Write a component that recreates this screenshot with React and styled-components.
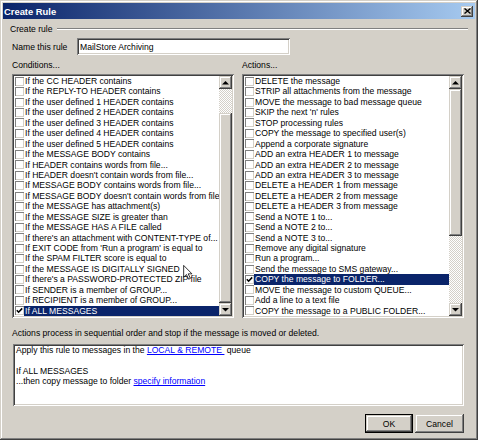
import React from "react";
import styled, { createGlobalStyle, css } from "styled-components";

const conditions = [
  "If the CC HEADER contains",
  "If the REPLY-TO HEADER contains",
  "If the user defined 1 HEADER contains",
  "If the user defined 2 HEADER contains",
  "If the user defined 3 HEADER contains",
  "If the user defined 4 HEADER contains",
  "If the user defined 5 HEADER contains",
  "If the MESSAGE BODY contains",
  "If HEADER contains words from file...",
  "If HEADER doesn't contain words from file...",
  "If MESSAGE BODY contains words from file...",
  "If MESSAGE BODY doesn't contain words from file.",
  "If the MESSAGE has attachment(s)",
  "If the MESSAGE SIZE is greater than",
  "If the MESSAGE HAS A FILE called",
  "If there's an attachment with CONTENT-TYPE of...",
  "If EXIT CODE from 'Run a program' is equal to",
  "If the SPAM FILTER score is equal to",
  "If the MESSAGE IS DIGITALLY SIGNED",
  "If there's a PASSWORD-PROTECTED ZIP file",
  "If SENDER is a member of GROUP...",
  "If RECIPIENT is a member of GROUP...",
  "If ALL MESSAGES",
];

const actions = [
  "DELETE the message",
  "STRIP all attachments from the message",
  "MOVE the message to bad message queue",
  "SKIP the next 'n' rules",
  "STOP processing rules",
  "COPY the message to specified user(s)",
  "Append a corporate signature",
  "ADD an extra HEADER 1 to message",
  "ADD an extra HEADER 2 to message",
  "ADD an extra HEADER 3 to message",
  "DELETE a HEADER 1 from message",
  "DELETE a HEADER 2 from message",
  "DELETE a HEADER 3 from message",
  "Send a NOTE 1 to...",
  "Send a NOTE 2 to...",
  "Send a NOTE 3 to...",
  "Remove any digital signature",
  "Run a program...",
  "Send the message to SMS gateway...",
  "COPY the message to FOLDER...",
  "MOVE the message to custom QUEUE...",
  "Add a line to a text file",
  "COPY the message to a PUBLIC FOLDER...",
];

const GlobalStyle = createGlobalStyle`
  html, body {
    margin: 0;
    padding: 0;
    background: #d4d0c8;
  }
  body {
    font-family: "Liberation Sans", Arial, sans-serif;
    font-size: 8.6px;
    color: #000;
  }
`;

const raised = css`
  background: #d4d0c8;
  box-shadow: inset -1px -1px #404040, inset 1px 1px #d4d0c8,
    inset -2px -2px #808080, inset 2px 2px #fff;
`;

const sunken = css`
  box-shadow: inset 1px 1px #808080, inset -1px -1px #fff,
    inset 2px 2px #404040, inset -2px -2px #d4d0c8;
`;

const Window = styled.div`
  position: relative;
  width: 478px;
  height: 440px;
  box-sizing: border-box;
  padding: 3px;
  display: flex;
  flex-direction: column;
  ${raised}
`;

const TitleBar = styled.div`
  height: 16px;
  display: flex;
  align-items: center;
  justify-content: space-between;
  padding: 0 2px 0 1px;
  background: linear-gradient(to right, #0a246a, #a6caf0);
`;

const Title = styled.span`
  color: #fff;
  font-weight: bold;
  font-size: 9.4px;
`;

const CloseButton = styled.div`
  width: 12px;
  height: 11px;
  display: flex;
  align-items: center;
  justify-content: center;
  ${raised}
`;

const Body = styled.div`
  flex: 1;
  display: flex;
  flex-direction: column;
  padding: 0 11px 0 9px;
`;

const GroupHeader = styled.div`
  height: 10px;
  margin: 5px -4px 0 -2px;
  display: flex;
  align-items: center;
  gap: 4px;
`;

const Etched = styled.div`
  flex: 1;
  border-top: 1px solid #808080;
  border-bottom: 1px solid #fff;
`;

const NameRow = styled.div`
  margin-top: 4px;
  height: 17px;
  display: flex;
  align-items: center;
`;

const NameLabel = styled.span`
  width: 65px;
`;

const TextInput = styled.div`
  width: 213px;
  height: 17px;
  box-sizing: border-box;
  padding: 0 3px;
  display: flex;
  align-items: center;
  background: #fff;
  ${sunken}
`;

const Columns = styled.div`
  display: grid;
  grid-template-columns: 222px 222px;
  column-gap: 8px;
  margin-top: ${(p) => p.$gap}px;
`;

const ColumnLabel = styled.div`
  height: 10px;
  line-height: 10px;
`;

const ListBox = styled.div`
  height: 244px;
  box-sizing: border-box;
  padding: 2px;
  display: flex;
  background: #fff;
  ${sunken}
`;

const Rows = styled.div`
  flex: 1;
  min-width: 0;
  display: flex;
  flex-direction: column;
`;

const Row = styled.div`
  height: 10.45px;
  display: flex;
  align-items: center;
`;

const Check = styled.div`
  flex: none;
  width: 9px;
  height: 9px;
  margin-left: 1px;
  display: flex;
  align-items: center;
  justify-content: center;
  background: #fff;
  box-shadow: inset 1px 1px #808080, inset -1px -1px #d4d0c8;
`;

const RowText = styled.div`
  flex: 1;
  height: 100%;
  line-height: 10.45px;
  padding-left: 1px;
  white-space: nowrap;
  overflow: hidden;
  ${(p) =>
    p.$selected &&
    css`
      background: #0a246a;
      color: #fff;
    `}
`;

const ScrollBar = styled.div`
  flex: none;
  width: 13px;
  display: flex;
  flex-direction: column;
`;

const ScrollButton = styled.div`
  flex: none;
  height: 13px;
  display: flex;
  align-items: center;
  justify-content: center;
  ${raised}
`;

const Track = styled.div`
  flex: 1;
  display: flex;
  flex-direction: column;
  background: repeating-conic-gradient(#fff 0 25%, #d4d0c8 0 50%) 0 0 / 2px 2px;
`;

const Thumb = styled.div`
  flex: none;
  margin-top: ${(p) => p.$offset}px;
  height: ${(p) => p.$size}px;
  ${raised}
`;

const Note = styled.div`
  margin-top: 10px;
  height: 10px;
  line-height: 10px;
`;

const InfoBox = styled.div`
  margin: 6px 0 0 1px;
  height: 62px;
  box-sizing: border-box;
  padding: 1px 3px;
  background: #fff;
  line-height: 10.45px;
  ${sunken}
`;

const InfoLine = styled.div`
  height: 10.45px;
  white-space: pre;
`;

const Link = styled.span`
  color: #0000ff;
  text-decoration: underline;
`;

const ButtonRow = styled.div`
  margin-top: 8px;
  display: flex;
  justify-content: flex-end;
  gap: 2px;
`;

const Button = styled.div`
  width: ${(p) => p.$width}px;
  height: 19px;
  box-sizing: border-box;
  display: flex;
  align-items: center;
  justify-content: center;
  ${raised}
  ${(p) =>
    p.$default &&
    css`
      border: 1px solid #000;
    `}
`;

const Cursor = styled.svg`
  position: absolute;
  left: 183px;
  top: 265px;
`;

const Arrow = ({ down }) => (
  <svg width="7" height="4" viewBox="0 0 7 4">
    <polygon
      points={down ? "0,0 7,0 3.5,3.5" : "0,3.5 7,3.5 3.5,0"}
      fill="#000"
    />
  </svg>
);

const CheckMark = () => (
  <svg width="7" height="7" viewBox="0 0 7 7">
    <polyline
      points="0.8,3.3 2.6,5.2 6.2,1.4"
      fill="none"
      stroke="#000"
      strokeWidth="1.6"
    />
  </svg>
);

const CheckList = ({ items, selected, thumbOffset, thumbSize }) => (
  <ListBox>
    <Rows>
      {items.map((text, i) => (
        <Row key={text}>
          <Check>{i === selected && <CheckMark />}</Check>
          <RowText $selected={i === selected}>{text}</RowText>
        </Row>
      ))}
    </Rows>
    <ScrollBar>
      <ScrollButton>
        <Arrow />
      </ScrollButton>
      <Track>
        <Thumb $offset={thumbOffset} $size={thumbSize} />
      </Track>
      <ScrollButton>
        <Arrow down />
      </ScrollButton>
    </ScrollBar>
  </ListBox>
);

export default function App() {
  return (
    <>
      <GlobalStyle />
      <Window>
        <TitleBar>
          <Title>Create Rule</Title>
          <CloseButton>
            <svg width="7" height="6" viewBox="0 0 7 6">
              <path d="M0.5 0.5 L6.5 5.5 M6.5 0.5 L0.5 5.5" stroke="#000" strokeWidth="1.4" />
            </svg>
          </CloseButton>
        </TitleBar>
        <Body>
          <GroupHeader>
            <span>Create rule</span>
            <Etched />
          </GroupHeader>
          <NameRow>
            <NameLabel>Name this rule</NameLabel>
            <TextInput>MailStore Archiving</TextInput>
          </NameRow>
          <Columns $gap={5}>
            <ColumnLabel>Conditions...</ColumnLabel>
            <ColumnLabel>Actions...</ColumnLabel>
          </Columns>
          <Columns $gap={4}>
            <CheckList items={conditions} selected={22} thumbOffset={24} thumbSize={190} />
            <CheckList items={actions} selected={19} thumbOffset={0} thumbSize={147} />
          </Columns>
          <Note>Actions process in sequential order and stop if the message is moved or deleted.</Note>
          <InfoBox>
            <InfoLine>
              Apply this rule to messages in the <Link>LOCAL &amp; REMOTE </Link> queue
            </InfoLine>
            <InfoLine> </InfoLine>
            <InfoLine>If ALL MESSAGES</InfoLine>
            <InfoLine>
              ...then copy message to folder <Link>specify information</Link>
            </InfoLine>
          </InfoBox>
          <ButtonRow>
            <Button $width={48} $default>OK</Button>
            <Button $width={49}>Cancel</Button>
          </ButtonRow>
        </Body>
        <Cursor width="10" height="15" viewBox="0 0 12 19">
          <path d="M0.5 0.5 L0.5 15.5 L4 12 L6.8 18 L9 17 L6.3 11.2 L11 11.2 Z" fill="#fff" stroke="#000" strokeWidth="1" />
        </Cursor>
      </Window>
    </>
  );
}
